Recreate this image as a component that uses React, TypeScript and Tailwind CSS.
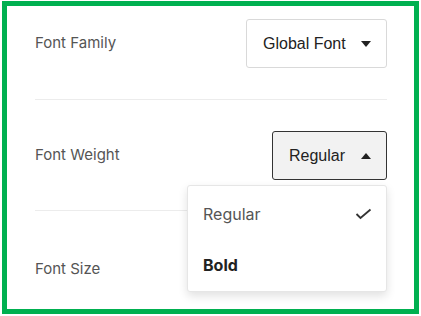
export default function App() {
  return (
    <div className="w-[421px] h-[316px] bg-white pt-px pl-[2px]">
      <div className="relative w-[417px] h-[313px] border-[5px] border-[#00b050] bg-white pl-[28px] pr-[27px] font-['Inter',sans-serif]">
        {/* Font Family */}
        <div className="flex items-center justify-between pt-[13px] pb-[31px] border-b border-[#ececec]">
          <span className="text-[15px] text-[#555]">Font Family</span>
          <button className="h-[49px] w-[141px] flex items-center justify-between pl-4 pr-[15px] border border-[#d9d9d9] rounded-[3px] bg-white font-['Liberation_Sans',Arial,sans-serif] text-[16px] text-[#222]">
            <span>Global Font</span>
            <svg width="10" height="6" viewBox="0 0 10 6">
              <path d="M0 0 H10 L5 6 Z" fill="#222" />
            </svg>
          </button>
        </div>

        {/* Font Weight */}
        <div className="flex items-center justify-between pt-[31px] pb-[30px] border-b border-[#ececec]">
          <span className="text-[15px] text-[#555]">Font Weight</span>
          <button className="h-[49px] w-[115px] flex items-center justify-between pl-4 pr-[15px] border-[1.5px] border-[#333] rounded-[3px] bg-[#f2f2f2] font-['Liberation_Sans',Arial,sans-serif] text-[16px] text-[#222]">
            <span>Regular</span>
            <svg width="10" height="6" viewBox="0 0 10 6">
              <path d="M0 6 H10 L5 0 Z" fill="#222" />
            </svg>
          </button>
        </div>

        {/* Font Size */}
        <div className="flex items-center justify-between pt-[33px]">
          <span className="text-[15px] text-[#555] leading-[49px]">Font Size</span>
        </div>

        {/* Dropdown menu */}
        <div className="absolute left-[180px] top-[179px] w-[200px] h-[107px] bg-white border border-[#e6e6e6] rounded-[3px] shadow-[0_4px_10px_rgba(0,0,0,0.12)] flex flex-col pt-[2px]">
          <div className="flex items-center justify-between pl-[15px] pr-[14px] h-[52px] text-[16px] text-[#555]">
            <span>Regular</span>
            <svg width="17" height="12" viewBox="0 0 17 12">
              <path d="M1.5 6 L5.5 10 L15.5 1.5" fill="none" stroke="#333" strokeWidth="1.8" />
            </svg>
          </div>
          <div className="flex items-center pl-[15px] h-[52px] text-[16px] font-bold text-[#222]">
            <span>Bold</span>
          </div>
        </div>
      </div>
    </div>
  );
}
